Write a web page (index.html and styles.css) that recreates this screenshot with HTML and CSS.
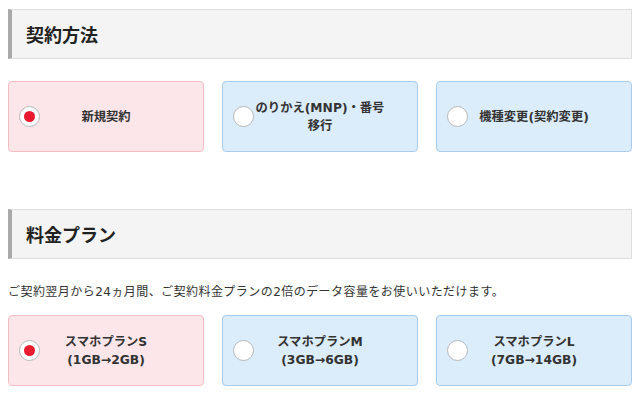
FILE: index.html
```html
<!DOCTYPE html>
<html lang="ja">
<head>
<meta charset="utf-8">
<title>契約方法</title>
<link rel="stylesheet" href="styles.css">
</head>
<body>
<section class="sec">
  <h2 class="heading">契約方法</h2>
  <div class="options first">
    <label class="opt selected"><span class="radio"></span><span class="text">新規契約</span></label>
    <label class="opt"><span class="radio"></span><span class="text">のりかえ(MNP)・番号<br>移行</span></label>
    <label class="opt"><span class="radio"></span><span class="text">機種変更(契約変更)</span></label>
  </div>
</section>
<section class="sec sec2">
  <h2 class="heading">料金プラン</h2>
  <p class="desc">ご契約翌月から24ヵ月間、ご契約料金プランの2倍のデータ容量をお使いいただけます。</p>
  <div class="options">
    <label class="opt selected"><span class="radio"></span><span class="text">スマホプランS<br>(1GB→2GB)</span></label>
    <label class="opt"><span class="radio"></span><span class="text">スマホプランM<br>(3GB→6GB)</span></label>
    <label class="opt"><span class="radio"></span><span class="text">スマホプランL<br>(7GB→14GB)</span></label>
  </div>
</section>
</body>
</html>
```
FILE: styles.css
```css
body {
  margin: 8px;
  font-family: "Noto Sans CJK JP", "Noto Sans", sans-serif;
  color: #333;
  background: #fff;
}
.sec { margin-top: 1px; }
.sec2 { margin-top: 57px; }
.heading {
  margin: 0;
  box-sizing: border-box;
  height: 50px;
  display: flex;
  align-items: center;
  background: #f4f4f4;
  border: 1px solid #dedede;
  border-left: 4px solid #a9a9a9;
  padding-left: 14px;
  font-size: 18px;
  font-weight: bold;
  color: #222;
}
.desc {
  margin: 24px 0 0;
  font-family: "DejaVu Sans", "Noto Sans CJK JP", sans-serif;
  font-size: 12px;
  letter-spacing: 0.45px;
  line-height: 18px;
  color: #333;
}
.options {
  display: grid;
  grid-template-columns: repeat(3, 1fr);
  gap: 18px;
  margin-top: 14px;
}
.options.first { margin-top: 22px; }
.opt {
  box-sizing: border-box;
  height: 71px;
  display: grid;
  grid-template-columns: 21px 1fr 21px;
  align-items: center;
  padding: 0 10px;
  border: 1px solid #a9cced;
  border-radius: 4px;
  background: #dbecfb;
}
.opt.selected {
  border-color: #f5bec4;
  background: #fde6e9;
}
.radio {
  box-sizing: border-box;
  width: 21px;
  height: 21px;
  border-radius: 50%;
  border: 1px solid #b8b8b8;
  background: #fff;
  display: flex;
  align-items: center;
  justify-content: center;
}
.selected .radio::after {
  content: "";
  width: 11px;
  height: 11px;
  border-radius: 50%;
  background: #eb1b2f;
}
.text {
  text-align: center;
  font-family: "DejaVu Sans", "Noto Sans CJK JP", sans-serif;
  font-size: 12.3px;
  font-weight: bold;
  line-height: 18px;
  color: #333;
}
```
